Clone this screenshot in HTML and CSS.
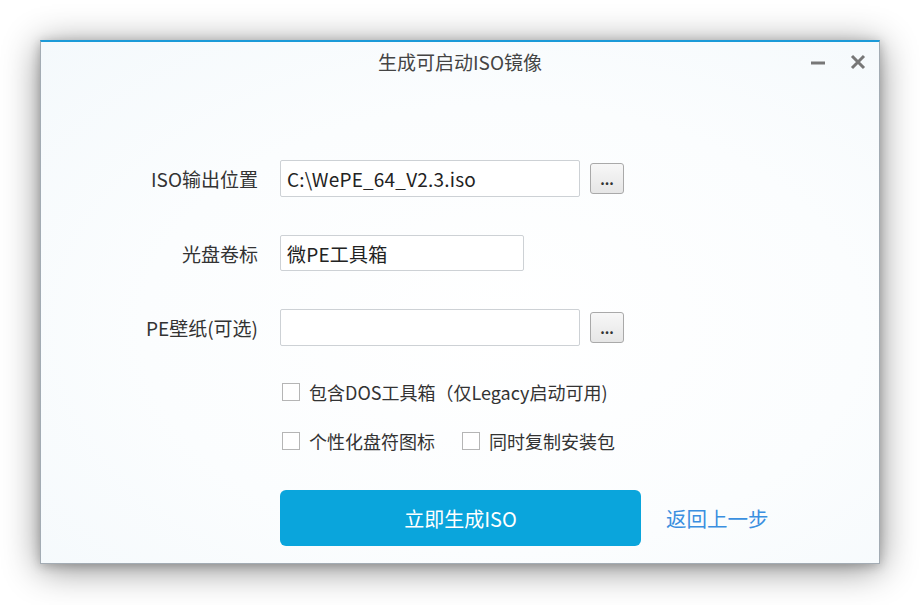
FILE: index.html
```html
<!DOCTYPE html>
<html lang="zh-CN">
<head>
    <meta charset="UTF-8">
    <title>生成可启动ISO镜像</title>
    <link rel="stylesheet" href="styles.css">
</head>
<body>
    <div class="window">
        <div class="titlebar">
            <div class="title">生成可启动ISO镜像</div>
            <div class="controls">
                <svg class="ctl" width="18" height="18" viewBox="0 0 18 18"><path d="M2 10h14" stroke="#777" stroke-width="3"/></svg>
                <svg class="ctl" width="18" height="18" viewBox="0 0 18 18"><path d="M3 3l12 12M15 3L3 15" stroke="#777" stroke-width="3"/></svg>
            </div>
        </div>

        <div class="form">
            <label class="label">ISO输出位置</label>
            <div class="field">
                <div class="input wide">C:\WePE_64_V2.3.iso</div>
                <div class="browse">...</div>
            </div>

            <label class="label">光盘卷标</label>
            <div class="field">
                <div class="input short">微PE工具箱</div>
            </div>

            <label class="label">PE壁纸(可选)</label>
            <div class="field">
                <div class="input wide"></div>
                <div class="browse">...</div>
            </div>
        </div>

        <div class="options">
            <div class="opt-row first">
                <span class="check"></span><span class="opt-text">包含DOS工具箱（仅Legacy启动可用)</span>
            </div>
            <div class="opt-row">
                <span class="check"></span><span class="opt-text">个性化盘符图标</span>
                <span class="check second"></span><span class="opt-text">同时复制安装包</span>
            </div>
        </div>

        <div class="actions">
            <button class="primary">立即生成ISO</button>
            <a class="back">返回上一步</a>
        </div>
    </div>
</body>
</html>
```

FILE: styles.css
```css
* {
    box-sizing: border-box;
}
html {
    background: #fff;
}
body {
    margin: 0;
    padding: 40px 0 41px 40px;
    min-height: 605px;
    background: #fff;
    font-family: 'Noto Sans CJK SC', sans-serif;
    color: #333;
}
.window {
    width: 840px;
    height: 524px;
    border: 1px solid #a3acb4;
    border-top: 2px solid #1b9ad8;
    background: radial-gradient(ellipse at 55% 55%, #ffffff 0%, #fbfdfe 55%, #f4f9fc 100%);
    box-shadow: 0 5px 34px rgba(0, 0, 0, 0.45), 0 2px 10px rgba(0, 0, 0, 0.22);
}
.titlebar {
    position: relative;
    height: 44px;
    display: flex;
    align-items: flex-start;
    justify-content: center;
    padding-top: 6px;
}
.title {
    font-size: 19px;
    line-height: 27px;
    color: #444;
}
.controls {
    position: absolute;
    right: 12px;
    top: 11px;
    display: flex;
    gap: 22px;
}
.form {
    display: grid;
    grid-template-columns: 217px auto;
    column-gap: 22px;
    row-gap: 38px;
    align-items: center;
    margin-top: 74px;
}
.label {
    text-align: right;
    font-size: 19px;
    color: #333;
}
.field {
    display: flex;
    align-items: center;
    gap: 10px;
}
.input {
    height: 37px;
    background: #fff;
    border: 1px solid #cdd1d5;
    border-radius: 2px;
    padding: 0 6px;
    font-size: 19px;
    letter-spacing: 0.2px;
    line-height: 35px;
    color: #222;
}
.input.wide {
    width: 300px;
}
.input.short {
    width: 244px;
    height: 36px;
}
.browse {
    width: 34px;
    height: 31px;
    border: 1px solid #a9a9a9;
    border-radius: 3px;
    background: linear-gradient(#f7f7f7, #e6e6e6);
    font-size: 14px;
    text-align: center;
    line-height: 30px;
    color: #333;
    font-weight: bold;
}
.options {
    margin-left: 241px;
    margin-top: 37px;
}
.opt-row {
    display: flex;
    align-items: center;
    height: 18px;
    margin-bottom: 31px;
}
.check {
    width: 18px;
    height: 18px;
    border: 1px solid #b5b5b5;
    background: #fff;
    margin-right: 9px;
}
.check.second {
    margin-left: 27px;
}
.opt-text {
    font-size: 18px;
    color: #333;
}
.actions {
    display: flex;
    align-items: center;
    margin-left: 239px;
    margin-top: 40px;
}
.primary {
    width: 361px;
    height: 56px;
    border: none;
    border-radius: 6px;
    background: #0aa5dc;
    color: #fff;
    font-family: inherit;
    font-size: 20px;
}
.back {
    margin-left: 25px;
    font-size: 20.5px;
    color: #3a8fe0;
}
```
